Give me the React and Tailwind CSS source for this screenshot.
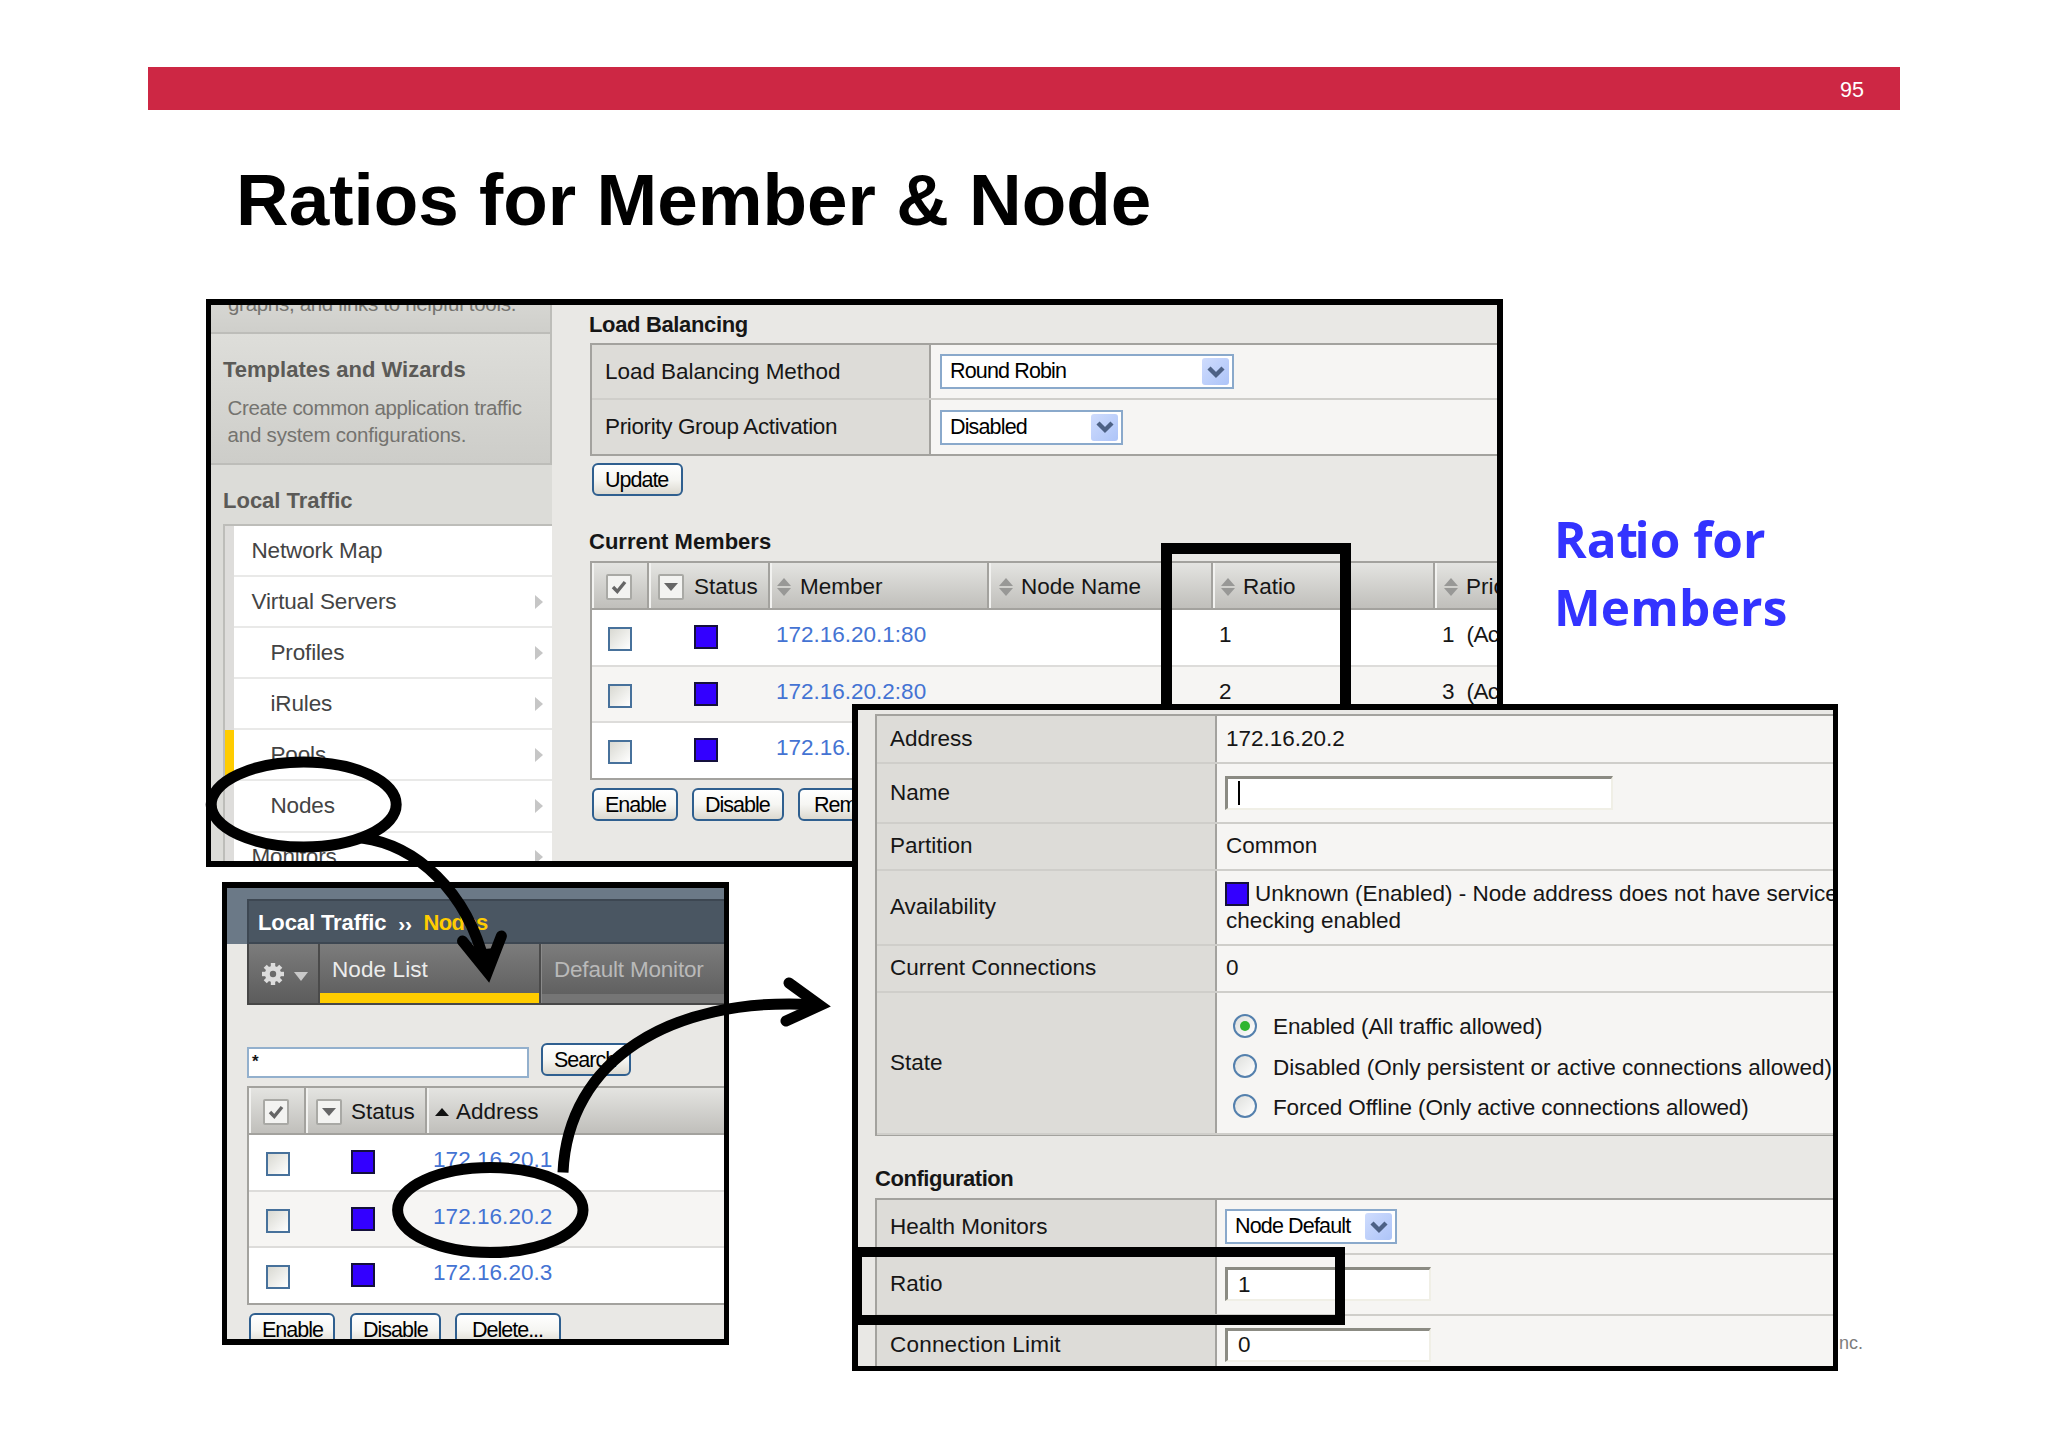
import React from 'react';

const menu = [
  { label: 'Network Map', arrow: false },
  { label: 'Virtual Servers', arrow: true },
  { label: 'Profiles', arrow: true, sub: true },
  { label: 'iRules', arrow: true, sub: true },
  { label: 'Pools', arrow: true, sub: true, active: true },
  { label: 'Nodes', arrow: true, sub: true },
  { label: 'Monitors', arrow: true },
];

const members = [
  { addr: '172.16.20.1:80', ratio: '1', prio: '1' },
  { addr: '172.16.20.2:80', ratio: '2', prio: '3' },
  { addr: '172.16.20.3:80', ratio: '3', prio: '3' },
];

const nodes = ['172.16.20.1', '172.16.20.2', '172.16.20.3'];

const states = [
  { label: 'Enabled (All traffic allowed)', on: true, track: 'tracking-[-0.1px]' },
  { label: 'Disabled (Only persistent or active connections allowed)', track: 'tracking-normal' },
  { label: 'Forced Offline (Only active connections allowed)', track: 'tracking-[-0.14px]' },
];

function Button({ children, className = '' }) {
  return (
    <button className={`h-[33px] shrink-0 rounded-[6px] border-2 border-[#2f5f8f] bg-linear-to-b from-white via-[#f6f6f3] to-[#dcd9d0] pl-[11px] text-left text-[21.5px] leading-[30px] tracking-[-1px] text-black ${className}`}>
      {children}
    </button>
  );
}

function Select({ children, className = '' }) {
  return (
    <div className={`flex h-[35px] items-center justify-between border-2 border-[#8aa9cb] bg-white pl-[8px] pr-[3px] text-[21.5px] tracking-[-0.85px] text-black ${className}`}>
      <span>{children}</span>
      <span className="flex h-[27px] w-[27px] items-center justify-center rounded-[3px] bg-linear-to-br from-[#cfdcfd] to-[#adc4f8]">
        <svg width="18" height="14" viewBox="0 0 18 14">
          <path d="M2 3 L9 10 L16 3" fill="none" stroke="#4d6185" strokeWidth="4.4" />
        </svg>
      </span>
    </div>
  );
}

function TextInput({ children, className = '' }) {
  return (
    <div className={`flex h-[34px] items-center border-t-[3px] border-l-[3px] border-r-2 border-b-2 border-t-[#8b8b83] border-l-[#8b8b83] border-r-[#f0efe6] border-b-[#f0efe6] bg-white pl-[10px] ${className}`}>
      {children}
    </div>
  );
}

function Checkbox() {
  return <span className="mt-[4px] block h-[24px] w-[24px] border-2 border-[#47719b] bg-linear-to-br from-[#d9d9d2] to-white" />;
}

function StatusSquare({ className = '' }) {
  return <span className={`block h-[24px] w-[24px] shrink-0 border-2 border-[#14103c] bg-[#3300ff] ${className}`} />;
}

function HeadIcon({ type }) {
  return (
    <span className="flex h-[26px] w-[26px] shrink-0 items-center justify-center rounded-[2px] border-2 border-[#a9a9a5] bg-[#f3f3f1]">
      {type === 'check' ? (
        <svg width="16" height="16" viewBox="0 0 16 16">
          <path d="M2 8 L6.3 12.5 L14 3" fill="none" stroke="#666" strokeWidth="3.4" />
        </svg>
      ) : (
        <svg width="14" height="8" viewBox="0 0 14 8">
          <path d="M0 0 H14 L7 8 Z" fill="#666" />
        </svg>
      )}
    </span>
  );
}

function SortIcon() {
  return (
    <svg width="14" height="18" viewBox="0 0 14 18" className="shrink-0">
      <path d="M0 8 L7 0 L14 8 Z M0 10 L7 18 L14 10 Z" fill="#989896" />
    </svg>
  );
}

function HeadCell({ children, className = '' }) {
  return (
    <div className={`flex h-full shrink-0 items-center border-r-2 border-l-2 border-r-[#a3a29e] border-l-[#f2f2f0] pt-[3px] ${className}`}>
      {children}
    </div>
  );
}

function Chevron() {
  return (
    <svg width="8" height="14" viewBox="0 0 8 14">
      <path d="M0 0 L8 7 L0 14 Z" fill="#c6c6c6" />
    </svg>
  );
}

function Sidebar() {
  return (
    <div className="w-[341px] shrink-0 bg-[#dcdcd8] text-[#5b5a57]">
      <div className="flex h-[29px] border-r-2 border-b-2 border-r-[#bdbdb9] border-b-[#bdbdb9] bg-linear-to-b from-[#d6d6d2] to-[#cfcfcb]">
        <p className="-mt-[13px] pl-[17px] text-[20.5px] leading-[24px] tracking-[-0.3px] text-[#74736f]">graphs, and links to helpful tools.</p>
      </div>
      <div className="h-[131px] border-r-2 border-b-2 border-r-[#bdbdb9] border-b-[#bdbdb9] bg-linear-to-b from-[#dededa] to-[#cdcdc9] pt-[24px]">
        <h3 className="pl-[12px] text-[22px] leading-[24px] font-bold">Templates and Wizards</h3>
        <p className="pt-[12px] pl-[16.5px] text-[20.5px] leading-[27.3px] tracking-[-0.33px] text-[#74736f]">
          Create common application traffic<br /><span className="tracking-[-0.2px]">and system configurations.</span>
        </p>
      </div>
      <h3 className="h-[59px] pt-[24px] pl-[12px] text-[22px] leading-[24px] font-bold">Local Traffic</h3>
      <div className="ml-[12px] border-t-2 border-l-2 border-[#bdbdb9]">
        {menu.map(m => (
          <div key={m.label} className="flex h-[51.1px]">
            <div className={`w-[9px] ${m.active ? 'bg-[#ffcc00]' : 'bg-[#dedddb]'}`} />
            <div className={`flex flex-1 items-center justify-between border-b-2 border-[#e9e9e8] bg-white pr-[9px] text-[22.5px] tracking-[-0.15px] text-[#444] ${m.sub ? 'pl-[36.5px]' : 'pl-[17.5px]'}`}>
              <span>{m.label}</span>
              {m.arrow && <Chevron />}
            </div>
          </div>
        ))}
      </div>
    </div>
  );
}

function PoolPanel() {
  return (
    <section className="absolute top-[299px] left-[206px] flex h-[568px] w-[1297px] overflow-hidden border-t-[6px] border-r-[6px] border-b-[6px] border-l-[5px] border-black bg-[#e9e8e5]">
      <Sidebar />
      <div className="w-[1000px] shrink-0 pl-[38px]">
        <h2 className="-ml-[1px] h-[38px] pt-[8px] text-[22px] leading-[24px] font-bold tracking-[-0.35px]">Load Balancing</h2>
        <div className="border-t-2 border-b-2 border-l-2 border-[#a3a29e] text-[22.5px]">
          <div className="flex h-[55px] border-b-2 border-[#cfceca]">
            <div className="flex w-[339px] items-center border-r-2 border-[#a3a29e] bg-[#dddcd8] pl-[13px] tracking-[-0.05px]">Load Balancing Method</div>
            <div className="flex flex-1 items-center bg-[#f6f5f3] pl-[9px]"><Select className="w-[294px]">Round Robin</Select></div>
          </div>
          <div className="flex h-[54px]">
            <div className="flex w-[339px] items-center border-r-2 border-[#a3a29e] bg-[#dddcd8] pl-[13px] tracking-[-0.37px]">Priority Group Activation</div>
            <div className="flex flex-1 items-center bg-[#f6f5f3] pl-[9px]"><Select className="w-[183px]">Disabled</Select></div>
          </div>
        </div>
        <Button className="mt-[7px] ml-[2px] w-[91px]">Update</Button>
        <h2 className="-ml-[1px] h-[65px] pt-[34px] text-[22px] leading-[24px] font-bold">Current Members</h2>
        <div className="border-l-2 border-[#a3a29e] text-[22.5px]">
          <div className="flex h-[49px] border-t-2 border-b-2 border-[#a3a29e] bg-linear-to-b from-[#e4e4e1] to-[#c0bfbb]">
            <HeadCell className="w-[57px] pl-[12px]"><HeadIcon type="check" /></HeadCell>
            <HeadCell className="w-[121px] gap-[10px] pl-[7px]"><HeadIcon type="drop" />Status</HeadCell>
            <HeadCell className="w-[219px] gap-[9px] pl-[5px]"><SortIcon />Member</HeadCell>
            <HeadCell className="w-[224px] gap-[8px] pl-[8px]"><SortIcon />Node Name</HeadCell>
            <HeadCell className="w-[222px] gap-[8px] pl-[6px]"><SortIcon />Ratio</HeadCell>
            <HeadCell className="w-[200px] gap-[8px] pl-[7px]"><SortIcon />Priority Group</HeadCell>
          </div>
          {members.map((m, i) => (
            <div key={m.addr} className={`flex h-[56.5px] items-center border-b-2 ${i === 2 ? 'border-[#a3a29e]' : 'border-[#dddcda]'} ${i === 1 ? 'bg-[#f6f5f3]' : 'bg-white'}`}>
              <div className="w-[57px] shrink-0 pl-[16px]"><Checkbox /></div>
              <div className="w-[121px] shrink-0 pl-[45px]"><StatusSquare /></div>
              <div className="w-[443px] shrink-0 pb-[4px] pl-[6px] text-[#4473d3]">{m.addr}</div>
              <div className="w-[222px] shrink-0 pb-[4px] pl-[6px]">{m.ratio}</div>
              <div className="shrink-0 pb-[4px] pl-[7px] whitespace-pre">{m.prio}<span className="pl-[12px] tracking-[-0.6px]">(Active)</span></div>
            </div>
          ))}
        </div>
        <div className="flex pt-[8px] pl-[2px]">
          <Button className="w-[86px]">Enable</Button>
          <Button className="ml-[14px] w-[92px]">Disable</Button>
          <Button className="ml-[14px] w-[105px] pl-[14px]">Remove</Button>
        </div>
      </div>
    </section>
  );
}

function Gear() {
  return (
    <svg width="24" height="24" viewBox="-12 -12 24 24">
      {[0, 45, 90, 135].map(a => (
        <rect key={a} x="-2.2" y="-11" width="4.4" height="22" fill="#dcdcdc" transform={`rotate(${a})`} />
      ))}
      <circle r="5.6" fill="none" stroke="#dcdcdc" strokeWidth="5" />
      <circle r="3.2" fill="#6a6a6a" />
    </svg>
  );
}

function NodeListPanel() {
  return (
    <section className="absolute top-[882px] left-[222px] h-[463px] w-[507px] overflow-hidden border-t-[6px] border-r-[5px] border-b-[6px] border-l-[5px] border-black bg-[#e9e8e5]">
      <div className="h-[56px] bg-[#6b7987] pt-[11px] pl-[20px]">
        <div className="flex h-[45px] items-center border-t-2 border-b-2 border-l-2 border-[#3d4752] bg-[#4a5662] pt-px pl-[9px] text-[22px] font-bold tracking-[-0.1px] text-white">
          Local Traffic<span className="mt-[3px] pr-[12px] pl-[12px] text-[21px] tracking-[-0.4px]">››</span><span className="tracking-[-0.6px] text-[#ffcc00]">Nodes</span>
        </div>
      </div>
      <div className="ml-[20px] flex h-[61px] w-[480px] border-b-2 border-l-2 border-[#474747] bg-linear-to-b from-[#7c7c7c] to-[#5c5c5c] text-[22.5px]">
        <div className="flex w-[71px] items-center gap-[9px] border-r-2 border-[#4a4a4a] pl-[12px]">
          <Gear />
          <svg width="14" height="9" viewBox="0 0 14 9" className="mt-[5px]"><path d="M0 0 H14 L7 9 Z" fill="#c9c9c9" /></svg>
        </div>
        <div className="flex w-[221px] flex-col justify-between border-r-2 border-[#4a4a4a]">
          <span className="pt-[12px] pl-[12px] leading-[28px] tracking-[0.1px] text-[#ececec]">Node List</span>
          <div className="h-[10px] bg-[#ffcc00]" />
        </div>
        <div className="flex flex-1 flex-col justify-between border-l border-[#8a8a8a]">
          <span className="pt-[12px] pl-[12px] leading-[28px] tracking-[-0.2px] text-[#b9b9b9]">Default Monitor</span>
          <div className="h-[9px] bg-[#757575]" />
        </div>
      </div>
      <div className="flex h-[81px] pt-[38px] pl-[20px]">
        <div className="mt-[4px] h-[31px] w-[282px] border-2 border-[#93b0cd] bg-white pl-[3px] text-[17px] leading-[25px] font-bold">*</div>
        <Button className="ml-[12px] w-[90px]">Search</Button>
      </div>
      <div className="ml-[20px] w-[500px] border-l-2 border-[#a3a29e] text-[22.5px]">
        <div className="flex h-[49px] border-t-2 border-b-2 border-[#a3a29e] bg-linear-to-b from-[#e4e4e1] to-[#c0bfbb]">
          <HeadCell className="w-[57px] pl-[12px]"><HeadIcon type="check" /></HeadCell>
          <HeadCell className="w-[121px] gap-[9px] pl-[8px]"><HeadIcon type="drop" />Status</HeadCell>
          <div className="flex items-center gap-[7px] border-l-2 border-[#f2f2f0] pt-[3px] pl-[6px]">
            <svg width="14" height="8" viewBox="0 0 14 8"><path d="M0 8 L7 0 L14 8 Z" fill="#111" /></svg>
            Address
          </div>
        </div>
        {nodes.map((n, i) => (
          <div key={n} className={`flex h-[56.5px] items-center border-b-2 ${i === 2 ? 'border-[#a3a29e]' : 'border-[#dddcda]'} ${i === 1 ? 'bg-[#f6f5f3]' : 'bg-white'}`}>
            <div className="w-[57px] shrink-0 pl-[17px]"><Checkbox /></div>
            <div className="w-[121px] shrink-0 pl-[45px]"><StatusSquare /></div>
            <div className="pb-[4px] pl-[6px] tracking-[0.05px] text-[#4473d3]">{n}</div>
          </div>
        ))}
      </div>
      <div className="flex pt-[8px] pl-[22px]">
        <Button className="w-[86px]">Enable</Button>
        <Button className="ml-[15px] w-[91px]">Disable</Button>
        <Button className="ml-[14px] w-[106px] pl-[15px]">Delete...</Button>
      </div>
    </section>
  );
}

function PropRow({ label, className, children }) {
  return (
    <div className={`flex border-b-2 border-[#cfceca] ${className}`}>
      <div className="flex w-[340px] shrink-0 items-center border-r-2 border-[#a3a29e] bg-[#dddcd8] pl-[13px]">{label}</div>
      <div className="flex flex-1 items-center bg-[#f6f5f3] pl-[8px]">{children}</div>
    </div>
  );
}

function NodePanel() {
  return (
    <section className="absolute top-[704px] left-[852px] h-[667px] w-[986px] overflow-hidden border-t-[6px] border-r-[5px] border-b-[5px] border-l-[6px] border-black bg-[#e9e8e5] pl-[17px] text-[22.5px]">
      <div className="mt-[4px] w-[975px] border-t-2 border-b border-l-2 border-[#a3a29e]">
        <PropRow label="Address" className="h-[47.5px]"><span className="pl-px">172.16.20.2</span></PropRow>
        <PropRow label="Name" className="h-[60px]">
          <TextInput className="w-[388px]"><span className="h-[24px] w-[2px] bg-black" /></TextInput>
        </PropRow>
        <PropRow label="Partition" className="h-[47.5px]"><span className="pl-px">Common</span></PropRow>
        <PropRow label="Availability" className="h-[74.5px]">
          <div className="leading-[27.3px] whitespace-nowrap">
            <div className="flex items-center gap-[6px]"><StatusSquare />Unknown (Enabled) - Node address does not have service</div>
            <div className="pl-px">checking enabled</div>
          </div>
        </PropRow>
        <PropRow label="Current Connections" className="h-[47.5px]"><span className="pl-px">0</span></PropRow>
        <PropRow label="State" className="h-[142px] border-[#a3a29e]">
          <div className="flex flex-col pt-[9px] pl-[8px]">
            {states.map(s => (
              <div key={s.label} className={`flex h-[40.3px] items-center gap-[16px] whitespace-nowrap ${s.track}`}>
                <span className="-mt-[3px] flex h-[24px] w-[24px] shrink-0 items-center justify-center rounded-full border-2 border-[#5480ad] bg-linear-to-br from-[#dedfdc] to-white">
                  {s.on && <span className="h-[10px] w-[10px] rounded-full bg-[#2fb52f]" />}
                </span>
                {s.label}
              </div>
            ))}
          </div>
        </PropRow>
      </div>
      <h2 className="h-[62px] pt-[31px] text-[22px] leading-[24px] font-bold tracking-[-0.45px]">Configuration</h2>
      <div className="w-[975px] border-t-2 border-l-2 border-[#a3a29e]">
        <PropRow label="Health Monitors" className="h-[55px]"><Select className="w-[172px]">Node Default</Select></PropRow>
        <PropRow label="Ratio" className="h-[60.5px]"><TextInput className="w-[206px]">1</TextInput></PropRow>
        <PropRow label={<span className="tracking-[0.2px]">Connection Limit</span>} className="h-[60.5px]"><TextInput className="w-[206px]">0</TextInput></PropRow>
      </div>
    </section>
  );
}

export default function App() {
  return (
    <main className="relative h-[1447px] w-[2048px] overflow-hidden bg-white font-['Liberation_Sans',Arial,sans-serif] whitespace-nowrap text-[#161616]">
      <header className="pt-[67px] pr-[148px] pl-[148px]">
        <div className="flex h-[43px] items-center justify-end bg-[#cd2744] pt-[3px] pr-[36px] text-[21.5px] text-white">95</div>
      </header>
      <h1 className="pt-[48px] pl-[236px] text-[72.9px] leading-[84px] font-bold text-black">Ratios for Member &amp; Node</h1>

      <PoolPanel />
      {/* callout round the Ratio column */}
      <div className="absolute top-[543px] left-[1161px] h-[200px] w-[190px] border-[11px] border-black" />
      <NodeListPanel />
      <div className="absolute top-[1332px] left-[1839px] text-[18px] leading-[22px] text-[#7d7d7d]">nc.</div>
      <NodePanel />
      <div className="absolute top-[1247px] left-[852px] h-[78px] w-[493px] border-[10.5px] border-black" />

      <p className="absolute top-[505px] left-[1554px] font-['Open_Sans','Noto_Sans',sans-serif] text-[49.5px] leading-[68px] font-bold text-[#3333ff]">
        Ra<span className="tracking-[-3.5px]">t</span>io for<br /><span className="tracking-[0.2px]">Members</span>
      </p>

      <svg className="absolute top-0 left-0" width="2048" height="1447" viewBox="0 0 2048 1447" fill="none" stroke="#000" strokeWidth="11">
        <ellipse cx="303.7" cy="804.5" rx="92.5" ry="42.5" />
        <path d="M362 838 C415 845 467 890 485 965" />
        <path d="M462.5 941 L487.5 972 L501.4 936" strokeLinecap="round" />
        <path d="M474 950 L487.5 972 L495 948 Z" fill="#000" stroke="none" />
        <ellipse cx="490.3" cy="1210" rx="92.7" ry="42.5" />
        <path d="M563 1172.5 C568 1060 670 997 812 1004.5" />
        <path d="M789 983 L820 1005.5 L786 1021" strokeLinecap="round" />
      </svg>
    </main>
  );
}
